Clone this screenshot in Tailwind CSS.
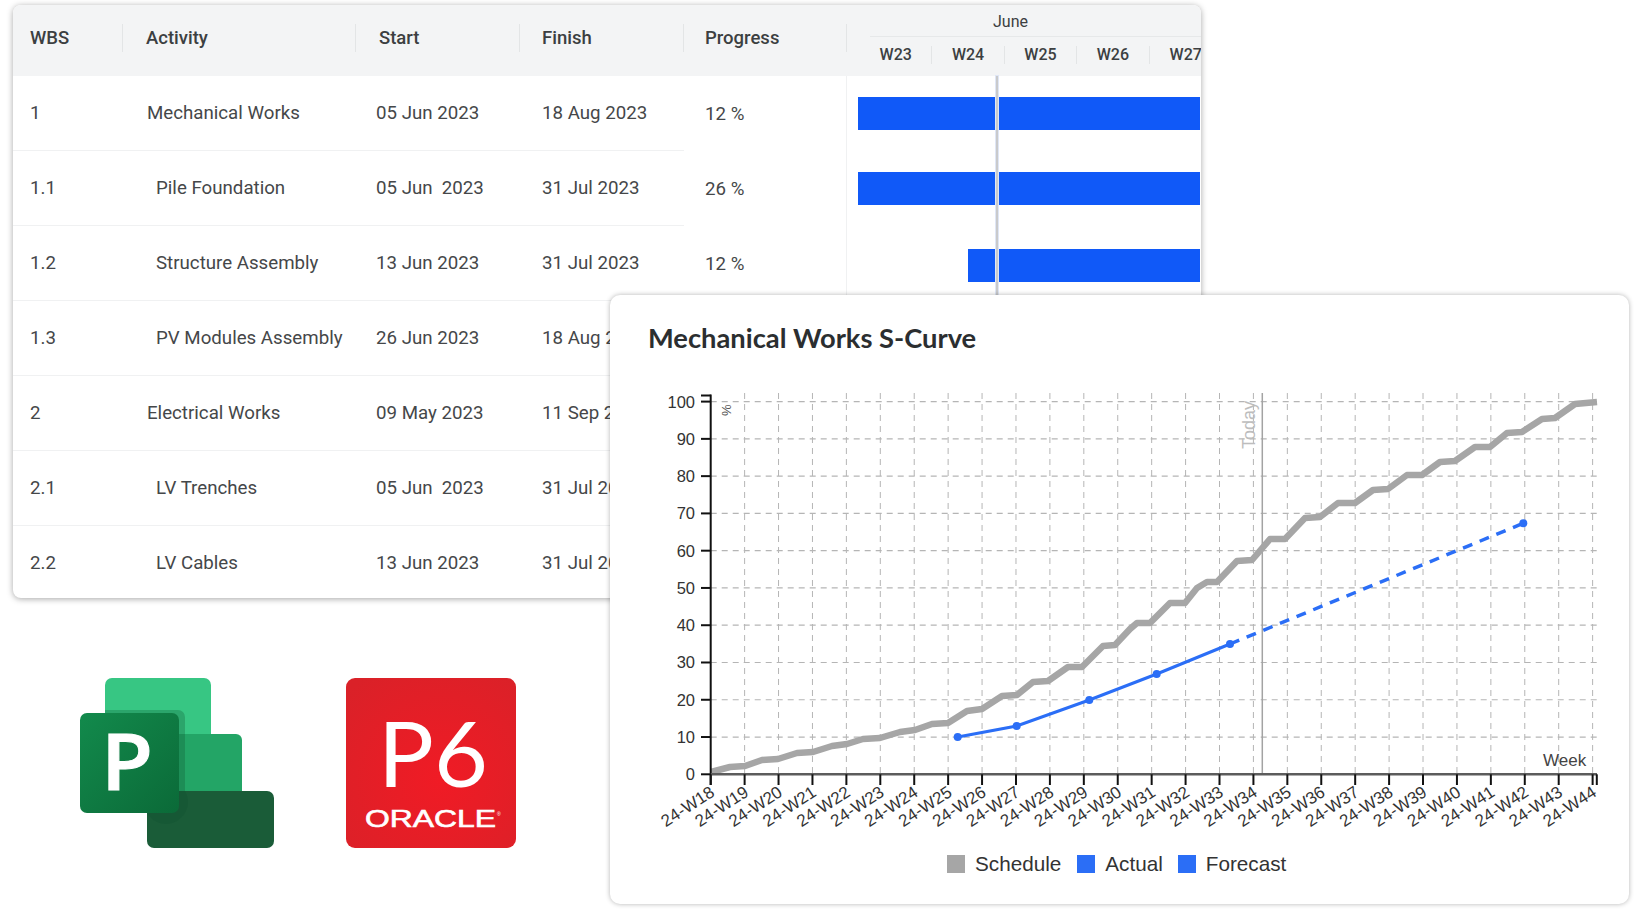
<!DOCTYPE html>
<html lang="en">

<head>
    <meta charset="UTF-8">
    <meta name="viewport" content="width=device-width, initial-scale=1.0">
    <script src="https://cdn.jsdelivr.net/npm/@tailwindcss/browser@4"></script>
    <title>Mechanical Works S-Curve</title>
</head>

<body class="relative w-[1634px] h-[918px] overflow-hidden bg-white font-['Roboto',sans-serif] text-[18.7px] text-[#454749]">

    <!-- Schedule table + gantt -->
    <div class="absolute left-[13px] top-[5px] w-[1188px] h-[593px] rounded-lg bg-white overflow-hidden shadow-[0_1px_6px_rgba(0,0,0,0.35)]">
        <div class="flex h-[71px] bg-[#f3f4f5] text-[18.5px] font-medium text-[#3c3f41]">
            <div class="w-[110px] flex items-center pl-[17px] pb-[4px] relative">WBS<span class="absolute right-0 top-[19px] h-[28px] w-px bg-[#e3e5e6]"></span></div>
            <div class="w-[233px] flex items-center pl-[23px] pb-[4px] relative">Activity<span class="absolute right-0 top-[19px] h-[28px] w-px bg-[#e3e5e6]"></span></div>
            <div class="w-[164px] flex items-center pl-[23px] pb-[4px] relative">Start<span class="absolute right-0 top-[19px] h-[28px] w-px bg-[#e3e5e6]"></span></div>
            <div class="w-[164px] flex items-center pl-[22px] pb-[4px] relative">Finish<span class="absolute right-0 top-[19px] h-[28px] w-px bg-[#e3e5e6]"></span></div>
            <div class="w-[163px] flex items-center pl-[21px] pb-[4px] relative">Progress<span class="absolute right-0 top-[19px] h-[28px] w-px bg-[#e3e5e6]"></span></div>
            <div class="flex-1 overflow-hidden">
                <div class="ml-[23px] h-[32px] pl-[123px] border-b border-[#e6e8e9] text-[16px] font-normal leading-[33px] text-[#3c3f41] w-[331px]">June</div>
                <div class="flex ml-[13px] mt-[9px] text-[16px] w-[400px]">
                    <div class="w-[72.4px] h-[18px] shrink-0 border-r border-[#e3e5e6] text-center leading-[18px]">W23</div>
                    <div class="w-[72.4px] h-[18px] shrink-0 border-r border-[#e3e5e6] text-center leading-[18px]">W24</div>
                    <div class="w-[72.4px] h-[18px] shrink-0 border-r border-[#e3e5e6] text-center leading-[18px]">W25</div>
                    <div class="w-[72.4px] h-[18px] shrink-0 border-r border-[#e3e5e6] text-center leading-[18px]">W26</div>
                    <div class="w-[72.4px] h-[18px] shrink-0 text-center leading-[18px]">W27</div>
                </div>
            </div>
        </div>

        <div class="flex">
            <div class="w-[834px] border-r border-[#f0f1f2]">
                <div class="flex h-[75px]">
                    <div class="w-[671px] grid grid-cols-[110px_233px_164px_164px] items-center border-b border-[#f0f1f2] whitespace-pre">
                        <span class="pl-[17px]">1</span><span class="pl-[24px]">Mechanical Works</span><span class="pl-[20px]">05 Jun 2023</span><span class="pl-[22px]">18 Aug 2023</span>
                    </div>
                    <span class="pl-[21px] pt-[24px]">12 %</span>
                </div>
                <div class="flex h-[75px]">
                    <div class="w-[671px] grid grid-cols-[110px_233px_164px_164px] items-center border-b border-[#f0f1f2] whitespace-pre">
                        <span class="pl-[17px]">1.1</span><span class="pl-[33px]">Pile Foundation</span><span class="pl-[20px]">05 Jun  2023</span><span class="pl-[22px]">31 Jul 2023</span>
                    </div>
                    <span class="pl-[21px] pt-[24px]">26 %</span>
                </div>
                <div class="flex h-[75px]">
                    <div class="w-[671px] grid grid-cols-[110px_233px_164px_164px] items-center border-b border-[#f0f1f2] whitespace-pre">
                        <span class="pl-[17px]">1.2</span><span class="pl-[33px]">Structure Assembly</span><span class="pl-[20px]">13 Jun 2023</span><span class="pl-[22px]">31 Jul 2023</span>
                    </div>
                    <span class="pl-[21px] pt-[24px]">12 %</span>
                </div>
                <div class="flex h-[75px]">
                    <div class="w-[671px] grid grid-cols-[110px_233px_164px_164px] items-center border-b border-[#f0f1f2] whitespace-pre">
                        <span class="pl-[17px]">1.3</span><span class="pl-[33px]">PV Modules Assembly</span><span class="pl-[20px]">26 Jun 2023</span><span class="pl-[22px]">18 Aug 2023</span>
                    </div>
                </div>
                <div class="flex h-[75px]">
                    <div class="w-[671px] grid grid-cols-[110px_233px_164px_164px] items-center border-b border-[#f0f1f2] whitespace-pre">
                        <span class="pl-[17px]">2</span><span class="pl-[24px]">Electrical Works</span><span class="pl-[20px]">09 May 2023</span><span class="pl-[22px]">11 Sep 2023</span>
                    </div>
                </div>
                <div class="flex h-[75px]">
                    <div class="w-[671px] grid grid-cols-[110px_233px_164px_164px] items-center border-b border-[#f0f1f2] whitespace-pre">
                        <span class="pl-[17px]">2.1</span><span class="pl-[33px]">LV Trenches</span><span class="pl-[20px]">05 Jun  2023</span><span class="pl-[22px]">31 Jul 2023</span>
                    </div>
                </div>
                <div class="flex h-[75px]">
                    <div class="w-[671px] grid grid-cols-[110px_233px_164px_164px] items-center whitespace-pre">
                        <span class="pl-[17px]">2.2</span><span class="pl-[33px]">LV Cables</span><span class="pl-[20px]">13 Jun 2023</span><span class="pl-[22px]">31 Jul 2023</span>
                    </div>
                </div>
            </div>

            <div class="relative flex-1">
                <div class="h-[75px] pt-[21px] pl-[11px] pr-[1px]"><div class="h-[33px] bg-[#1059f8]"></div></div>
                <div class="h-[75px] pt-[21px] pl-[11px] pr-[1px]"><div class="h-[33px] bg-[#1059f8]"></div></div>
                <div class="h-[75px] pt-[23px] pl-[121px] pr-[1px]"><div class="h-[33px] bg-[#1059f8]"></div></div>
                <div class="absolute left-[149px] top-0 h-[225px] w-[2px] bg-[#c9cacc] outline outline-[#dfe6f5]"></div>
            </div>
        </div>
    </div>

    <!-- MS Project logo -->
    <svg class="absolute left-[80px] top-[678px]" width="194" height="170" viewBox="0 0 194 170">
        <defs>
            <linearGradient id="msp" x1="0" y1="0" x2="1" y2="1">
                <stop offset="0" stop-color="#128a4c" />
                <stop offset="1" stop-color="#0b6a38" />
            </linearGradient>
        </defs>
        <rect x="25" y="0" width="106" height="80" rx="7" fill="#37c683" />
        <path d="M60 56H156a6 6 0 0 1 6 6V113H60Z" fill="#23a566" />
        <rect x="67" y="113" width="127" height="57" rx="7" fill="#1a5c38" />
        <path d="M25 32H98a7 7 0 0 1 7 7V113a20 20 0 0 1-38 22H25Z" fill="#0d4f2f" opacity="0.28" />
        <rect x="0" y="35" width="99" height="100" rx="7" fill="url(#msp)" />
        <text x="21" y="112" font-family="Open Sans" font-weight="600" font-size="78" textLength="52" lengthAdjust="spacingAndGlyphs" fill="#fff" stroke="#fff" stroke-width="1">P</text>
    </svg>

    <!-- P6 logo -->
    <svg class="absolute left-[346px] top-[678px]" width="170" height="170" viewBox="0 0 170 170">
        <defs>
            <radialGradient id="p6bg" cx="0.55" cy="0.6" r="0.75">
                <stop offset="0" stop-color="#f01b25" />
                <stop offset="1" stop-color="#da2128" />
            </radialGradient>
        </defs>
        <rect width="170" height="170" rx="9" fill="url(#p6bg)" />
        <text x="32" y="109" font-family="Lato" font-weight="400" font-size="92" textLength="110" lengthAdjust="spacingAndGlyphs" fill="#fff">P6</text>
        <text x="19" y="149" font-family="Liberation Sans" font-size="23" textLength="131" lengthAdjust="spacingAndGlyphs" fill="#fff" stroke="#fff" stroke-width="0.6">ORACLE</text>
        <text x="151" y="138" font-family="Liberation Sans" font-size="5" fill="#fff">®</text>
    </svg>

    <!-- S-curve card, sits over the table -->
    <div class="absolute left-[610px] top-[295px] w-[1019px] h-[609px] rounded-[10px] bg-white shadow-[0_0_5px_rgba(0,0,0,0.3)]">
        <h2 class="pl-[38px] pt-[25px] h-[90px] font-['Lato',sans-serif] font-bold text-[27.3px] leading-[36px] text-[#2b2e30]">Mechanical Works S-Curve</h2>
        <svg id="chart" class="ml-[30px] block" width="980" height="460" viewBox="640 385 980 460"></svg>
        <div class="flex items-center h-[38px] pl-[337px] font-['Liberation_Sans',sans-serif] text-[20.7px] text-[#333]">
            <span class="w-[18px] h-[18px] bg-[#a6a6a6] mr-[10px]"></span><span>Schedule</span>
            <span class="w-[18px] h-[18px] bg-[#2b6ef6] ml-[16px] mr-[10px]"></span><span>Actual</span>
            <span class="w-[18px] h-[18px] bg-[#2b6ef6] ml-[15px] mr-[10px]"></span><span>Forecast</span>
        </div>
    </div>

    <script>
        const x0 = 710.7, stepX = 33.92, y0 = 774.3, stepY = 37.27;
        const font = 'font-family="Liberation Sans"';
        let out = '';

        // grid
        for (let i = 1; i <= 10; i++) {
            const y = y0 - stepY * i;
            out += `<line x1="${x0}" x2="1597" y1="${y}" y2="${y}" stroke="#b5b5b5" stroke-width="1.2" stroke-dasharray="6 5" />`;
        }
        for (let i = 1; i <= 26; i++) {
            const x = x0 + stepX * i;
            out += `<line x1="${x}" x2="${x}" y1="393" y2="${y0}" stroke="#b5b5b5" stroke-width="1" stroke-dasharray="6 5" />`;
        }

        // today marker
        out += `<line x1="1262.3" x2="1262.3" y1="393" y2="${y0}" stroke="#a3a3a3" stroke-width="1.5" />`;
        out += `<text transform="translate(1255 449) rotate(-90)" ${font} font-size="18" fill="#bdbdbd">Today</text>`;
        out += `<text transform="translate(731 416) rotate(-90)" ${font} font-size="13" fill="#555">%</text>`;

        // schedule curve
        const schedule = [[711,772],[730,767],[745,766],[762,760],[778,759],[797,753],[813,752],[832,746],[847,744],[863,739],[880,738],[900,732],[915,730],[932,724],[948,723],[967,711],[982,709],[1002,696],[1017,695],[1033,682],[1048,681],[1068,667],[1082,667],[1103,646],[1115,645],[1130,629],[1137,623],[1150,623],[1170,603],[1185,603],[1197,588],[1207,582],[1217,582],[1237,561],[1252,560],[1270,539],[1285,539],[1305,518],[1320,517],[1338,503],[1355,503],[1373,490],[1388,489],[1407,475],[1422,475],[1440,462],[1455,461],[1475,447],[1490,447],[1507,433],[1522,432],[1542,419],[1555,418],[1575,404],[1597,402]];
        out += `<polyline points="${schedule.join(' ')}" fill="none" stroke="#a6a6a6" stroke-width="6.5" stroke-linejoin="round" />`;

        // forecast + actual
        out += `<line x1="1230" y1="644" x2="1523.3" y2="523.3" stroke="#2b6ef6" stroke-width="3.5" stroke-dasharray="10 8" />`;
        const actual = [[957.7,737],[1016.7,726],[1089.3,700],[1156.7,674],[1230,644]];
        out += `<polyline points="${actual.join(' ')}" fill="none" stroke="#2b6ef6" stroke-width="3" />`;
        [...actual, [1523.3,523.3]].forEach(p => {
            out += `<circle cx="${p[0]}" cy="${p[1]}" r="4" fill="#2b6ef6" />`;
        });

        // axes
        out += `<line x1="${x0}" x2="${x0}" y1="394.5" y2="785" stroke="#111" stroke-width="2" />`;
        out += `<line x1="701" x2="${x0}" y1="395.5" y2="395.5" stroke="#111" stroke-width="2" />`;
        out += `<line x1="${x0}" x2="1597" y1="${y0}" y2="${y0}" stroke="#5c5c5c" stroke-width="2.5" />`;
        for (let i = 0; i <= 10; i++) {
            const y = y0 - stepY * i;
            out += `<line x1="701" x2="${x0}" y1="${y}" y2="${y}" stroke="#111" stroke-width="2" />`;
            out += `<text x="695" y="${y + 6}" text-anchor="end" ${font} font-size="16.5" fill="#333">${i * 10}</text>`;
        }
        for (let i = 0; i <= 26; i++) {
            const x = x0 + stepX * i;
            out += `<line x1="${x}" x2="${x}" y1="${y0}" y2="785" stroke="#111" stroke-width="2" />`;
            out += `<text transform="translate(${x + 5} 795) rotate(-33)" text-anchor="end" ${font} font-size="17" fill="#333">24-W${18 + i}</text>`;
        }
        out += `<line x1="1596.8" x2="1596.8" y1="${y0}" y2="785" stroke="#111" stroke-width="2" />`;
        out += `<text x="1543" y="766" ${font} font-size="17" fill="#444">Week</text>`;

        document.getElementById('chart').innerHTML = out;
    </script>

</body>

</html>
